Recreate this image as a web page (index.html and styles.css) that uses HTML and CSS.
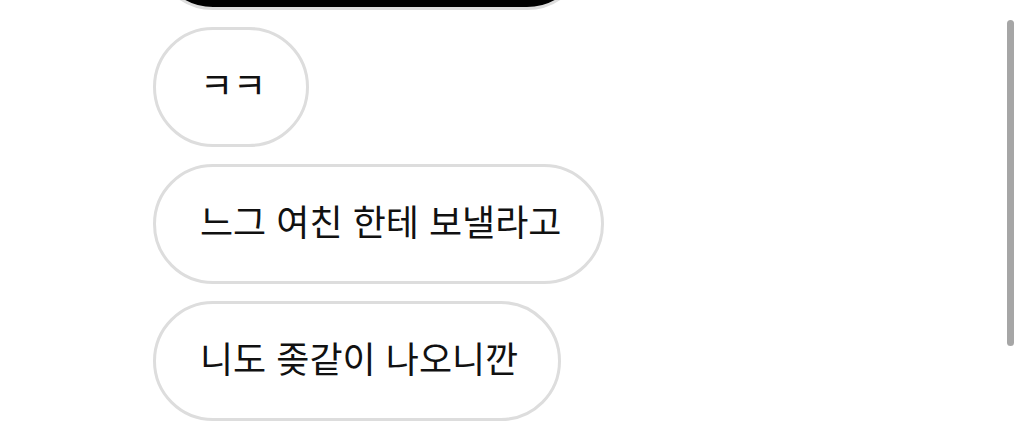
FILE: index.html
```html
<!DOCTYPE html>
<html lang="ko">
<head>
    <meta charset="UTF-8">
    <meta name="viewport" content="width=device-width, initial-scale=1.0">
    <title>채팅</title>
    <link rel="stylesheet" href="styles.css">
</head>
<body>
    <div class="chat">
        <div class="messages">
            <div class="bubble dark"></div>
            <div class="bubble">ㅋㅋ</div>
            <div class="bubble">느그 여친 한테 보낼라고</div>
            <div class="bubble">니도 좆같이 나오니깐</div>
        </div>
        <div class="scrollbar"></div>
    </div>
</body>
</html>
```

FILE: styles.css
```css
* {
    margin: 0;
    padding: 0;
    box-sizing: border-box;
    font-family: 'Noto Sans CJK KR', 'Noto Sans', sans-serif;
}

body {
    background-color: #ffffff;
    width: 1024px;
    height: 427px;
    overflow: hidden;
}

.chat {
    position: relative;
    display: flex;
    height: 427px;
    padding-left: 153px;
}

.messages {
    display: flex;
    flex-direction: column;
    align-items: flex-start;
    gap: 17px;
    margin-top: -110px;
}

.bubble {
    height: 120px;
    display: flex;
    align-items: center;
    padding: 0 40px 8px 44px;
    border: 3px solid #dddddd;
    border-radius: 60px;
    background-color: #ffffff;
    color: #111111;
    font-size: 36px;
    white-space: nowrap;
}

/* 위에 잘려 보이는 검은 말풍선 */
.bubble.dark {
    background-color: #000000;
    width: 434px;
}

.scrollbar {
    position: absolute;
    top: 20px;
    right: 10px;
    width: 7px;
    height: 326px;
    border-radius: 4px;
    background-color: #a6a6a6;
}
```
